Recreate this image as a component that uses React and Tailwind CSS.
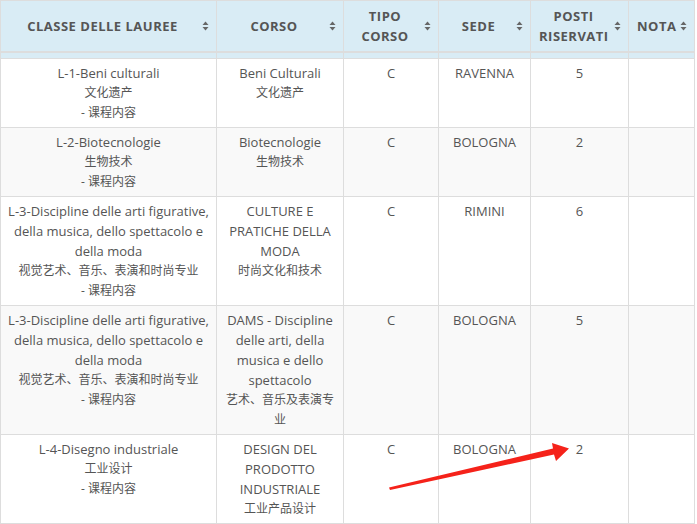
import React from "react";

const rows = [
  {
    classe: ["L-1-Beni culturali", "文化遗产", "- 课程内容"],
    corso: ["Beni Culturali", "文化遗产"],
    tipo: "C",
    sede: "RAVENNA",
    posti: "5",
  },
  {
    classe: ["L-2-Biotecnologie", "生物技术", "- 课程内容"],
    corso: ["Biotecnologie", "生物技术"],
    tipo: "C",
    sede: "BOLOGNA",
    posti: "2",
  },
  {
    classe: ["L-3-Discipline delle arti figurative, della musica, dello spettacolo e della moda", "视觉艺术、音乐、表演和时尚专业", "- 课程内容"],
    corso: ["CULTURE E PRATICHE DELLA MODA", "时尚文化和技术"],
    tipo: "C",
    sede: "RIMINI",
    posti: "6",
  },
  {
    classe: ["L-3-Discipline delle arti figurative, della musica, dello spettacolo e della moda", "视觉艺术、音乐、表演和时尚专业", "- 课程内容"],
    corso: ["DAMS - Discipline delle arti, della musica e dello spettacolo", "艺术、音乐及表演专业"],
    tipo: "C",
    sede: "BOLOGNA",
    posti: "5",
  },
  {
    classe: ["L-4-Disegno industriale", "工业设计", "- 课程内容"],
    corso: ["DESIGN DEL PRODOTTO INDUSTRIALE", "工业产品设计"],
    tipo: "C",
    sede: "BOLOGNA",
    posti: "2",
  },
];

function SortIcon() {
  return (
    <svg width="7" height="10" viewBox="0 0 7 10" className="absolute right-[7px] top-1/2 -translate-y-1/2">
      <path d="M3.5 0.5 L6.5 4 L0.5 4 Z" fill="#666" />
      <path d="M3.5 9.5 L6.5 6 L0.5 6 Z" fill="#666" />
    </svg>
  );
}

function Th({ children, className = "" }) {
  return (
    <th className={"relative border border-[#ddd] border-b-2 border-b-[#ddd] bg-[#d9ecf5] h-[51px] py-[5px] pl-2 pr-5 text-center align-middle font-bold text-[13px] leading-5 tracking-[0.5px] text-[#555] " + className}>
      {children}
      <SortIcon />
    </th>
  );
}

// chinese lines render a bit smaller, like YaHei in the original
const isCjk = (t) => /[\u4e00-\u9fff]/.test(t);

function Lines({ items }) {
  return items.map((t, i) => (
    <div key={i} className={isCjk(t) ? "text-[12px]" : ""}>
      {t}
    </div>
  ));
}

const td = "border border-[#ddd] px-[6px] pt-1 pb-1 align-top text-center";

export default function App() {
  return (
    <div
      className="relative w-[697px] h-[524px] overflow-hidden bg-white text-[#555]"
      style={{ fontFamily: '"Open Sans", "Noto Sans CJK SC", sans-serif' }}
    >
      <table className="table-fixed border-collapse w-[694px] text-[13px] leading-5">
        <colgroup>
          <col className="w-[216px]" />
          <col className="w-[127px]" />
          <col className="w-[95px]" />
          <col className="w-[92px]" />
          <col className="w-[98px]" />
          <col className="w-[66px]" />
        </colgroup>
        <thead>
          <tr>
            <Th>CLASSE DELLE LAUREE</Th>
            <Th>CORSO</Th>
            <Th>TIPO CORSO</Th>
            <Th>SEDE</Th>
            <Th>POSTI RISERVATI</Th>
            <Th className="pl-1">NOTA</Th>
          </tr>
          <tr className="h-[6px]">
            {[0, 1, 2, 3, 4, 5].map((i) => (
              <td key={i} className="bg-[#d9ecf5] border-x border-[#ddd] p-0" />
            ))}
          </tr>
        </thead>
        <tbody>
          {rows.map((r, i) => (
            <tr key={i} className={i % 2 === 1 ? "bg-[#f9f9f9]" : "bg-white"}>
              <td className={td}>
                <Lines items={r.classe} />
              </td>
              <td className={td}>
                <Lines items={r.corso} />
              </td>
              <td className={td}>{r.tipo}</td>
              <td className={td}>{r.sede}</td>
              <td className={td}>{r.posti}</td>
              <td className={td}></td>
            </tr>
          ))}
        </tbody>
      </table>
      <svg className="absolute left-0 top-0 pointer-events-none" width="697" height="524">
        <polygon
          points="389,487.5 553,448.5 552,443 569,448.5 556,461 554,454.5 390,490"
          fill="#f5221a"
        />
      </svg>
    </div>
  );
}
